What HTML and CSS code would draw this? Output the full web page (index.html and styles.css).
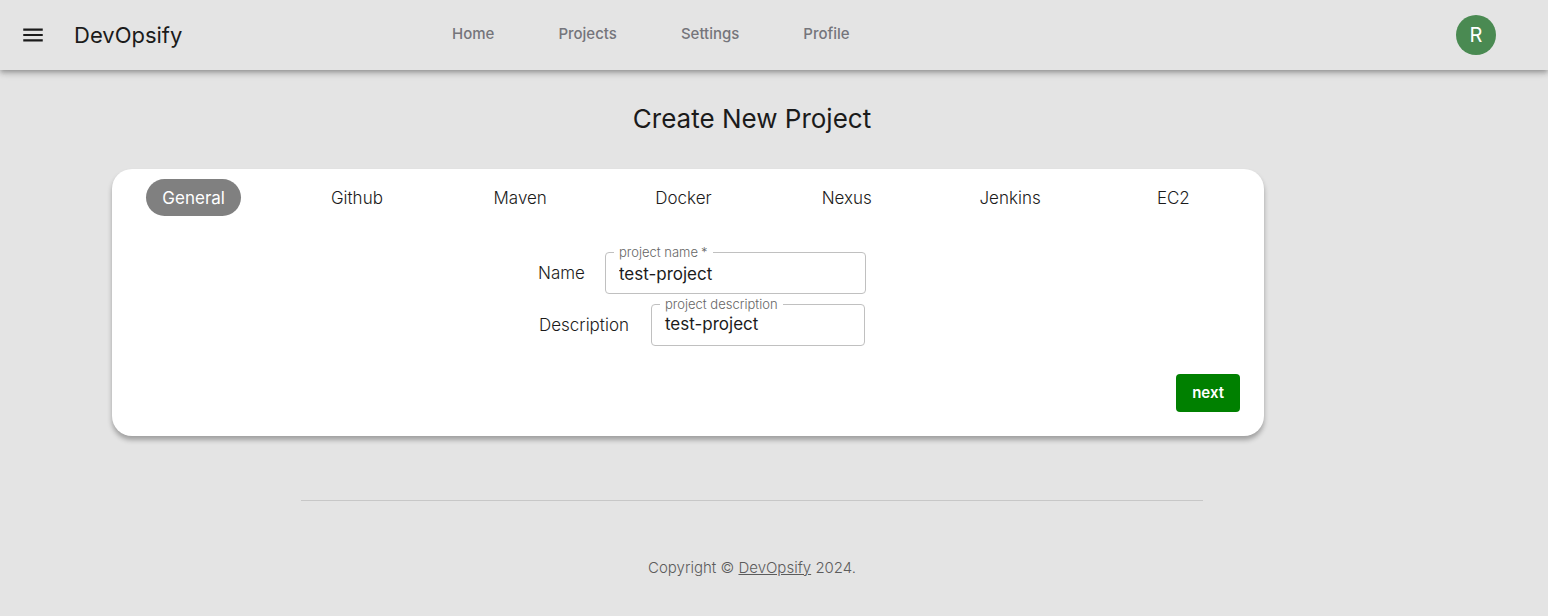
FILE: index.html
```html
<!DOCTYPE html>
<html lang="en">
<head>
<meta charset="utf-8">
<meta name="viewport" content="width=device-width, initial-scale=1">
<title>DevOpsify – Create New Project</title>
<link rel="stylesheet" href="styles.css">
</head>
<body>
<header class="topbar">
  <div class="brand">
    <button class="menu-button" type="button" aria-label="Open menu">
      <svg viewBox="0 0 24 24" width="26" height="26" aria-hidden="true"><path d="M3 18h18v-2H3v2zm0-5h18v-2H3v2zm0-7v2h18V6H3z" fill="currentColor"/></svg>
    </button>
    <span class="brand-name">DevOpsify</span>
  </div>
  <nav class="main-nav">
    <a href="#home">Home</a>
    <a href="#projects">Projects</a>
    <a href="#settings">Settings</a>
    <a href="#profile">Profile</a>
  </nav>
  <button class="avatar" type="button" aria-label="Account">R</button>
</header>
<div class="page">
  <main class="content">
    <h1 class="title">Create New Project</h1>
    <section class="card">
      <div class="tabs" role="tablist">
        <button class="tab active" type="button" role="tab" aria-selected="true">General</button>
        <button class="tab" type="button" role="tab">Github</button>
        <button class="tab" type="button" role="tab">Maven</button>
        <button class="tab" type="button" role="tab">Docker</button>
        <button class="tab" type="button" role="tab">Nexus</button>
        <button class="tab" type="button" role="tab">Jenkins</button>
        <button class="tab" type="button" role="tab">EC2</button>
      </div>
      <form class="form">
        <div class="fields">
          <div class="row">
            <span class="row-name">Name</span>
            <div class="field">
              <label class="field-label" for="name">project name<span class="star">*</span></label>
              <input class="control" id="name" type="text" value="test-project" required>
            </div>
          </div>
          <div class="row description-row">
            <span class="row-name">Description</span>
            <div class="field">
              <label class="field-label" for="description">project description</label>
              <textarea class="control multiline" id="description" rows="1">test-project</textarea>
            </div>
          </div>
        </div>
        <button class="next" type="button">next</button>
      </form>
    </section>
  </main>
  <footer class="footer">
    <hr class="divider">
    <p class="copyright">Copyright © <a href="#home">DevOpsify</a> 2024.</p>
  </footer>
</div>
</body>
</html>
```
FILE: styles.css
```css
* {
  box-sizing: border-box;
}

body {
  margin: 0;
  background: #e4e4e4;
  color: #1b1b1b;
  font-family: Inter, "Liberation Sans", sans-serif;
  font-size: 17px;
  font-weight: 300;
}

button,
input,
textarea {
  font: inherit;
  color: inherit;
}

button {
  border: 0;
  cursor: pointer;
}

.topbar {
  display: grid;
  grid-template-columns: 452px 1fr auto;
  align-items: center;
  height: 70px;
  padding-right: 52px;
  box-shadow: 0 2px 4px -1px rgba(0, 0, 0, 0.2), 0 4px 5px 0 rgba(0, 0, 0, 0.14), 0 1px 10px 0 rgba(0, 0, 0, 0.12);
  background: #e4e4e4;
}

.brand {
  display: flex;
  align-items: center;
  gap: 20px;
  padding-left: 12px;
}

.menu-button {
  display: flex;
  padding: 8px;
  background: none;
}

.brand-name {
  font-size: 22px;
  font-weight: 400;
}

.main-nav {
  display: flex;
  gap: 64px;
}

.main-nav a {
  color: #75757b;
  font-size: 15px;
  font-weight: 500;
  line-height: 18px;
  padding-bottom: 2px;
  text-decoration: none;
}

.avatar {
  width: 40px;
  height: 40px;
  padding: 0;
  border-radius: 50%;
  background: #4a8a52;
  color: #fff;
  font-size: 20px;
  font-weight: 400;
}

.page {
  margin-right: 44px;
}

.content {
  padding-top: 32px;
}

.title {
  margin: 0;
  font-size: 26px;
  font-weight: 400;
  line-height: 34px;
  text-align: center;
}

.card {
  margin: 33px 240px 0 112px;
  padding: 10px 24px 24px 0;
  border-radius: 20px;
  background: #fff;
  box-shadow: 0 4px 5px 0 rgba(0, 0, 0, 0.3);
}

.tabs {
  display: grid;
  grid-template-columns: repeat(7, 1fr);
  justify-items: center;
  margin-right: -15px;
}

.tab {
  height: 37px;
  padding: 0 16px;
  border-radius: 20px;
  background: none;
}

.tab.active {
  background: #808080;
  color: #fff;
  font-weight: 400;
}

.form {
  display: flex;
  flex-direction: column;
  padding-top: 36px;
}

.fields {
  display: grid;
  gap: 10px;
  width: 328px;
  margin-left: 426px;
}

.row {
  display: flex;
  align-items: center;
  gap: 20px;
}

.description-row {
  gap: 22px;
  padding: 0 1px;
}

.field {
  position: relative;
  display: flex;
  flex: 1;
  min-width: 0;
}

.field-label {
  position: absolute;
  top: -8px;
  left: 9px;
  padding: 0 5px;
  background: #fff;
  color: #666;
  font-size: 13px;
  line-height: 16px;
}

.star {
  margin-left: 3px;
}

.control {
  width: 100%;
  height: 42px;
  padding: 2px 13px 0;
  border: 1px solid #c0c0c0;
  border-radius: 4px;
  background: #fff;
  font-weight: 400;
}

.multiline {
  padding: 8px 13px;
  line-height: 22px;
  resize: none;
  overflow: hidden;
}

.next {
  align-self: flex-end;
  height: 38px;
  margin-top: 28px;
  padding: 0 16px 2px;
  border-radius: 4px;
  background: #008000;
  color: #fff;
  font-size: 15px;
  font-weight: 600;
}

.footer {
  padding-top: 64px;
}

.divider {
  width: 60%;
  height: 1px;
  margin: 0 auto;
  border: 0;
  background: #c7c7c7;
}

.copyright {
  margin: 56px 0 0;
  color: #5c5c5c;
  font-size: 15px;
  line-height: 22px;
  text-align: center;
}

.copyright a {
  color: inherit;
}
```
